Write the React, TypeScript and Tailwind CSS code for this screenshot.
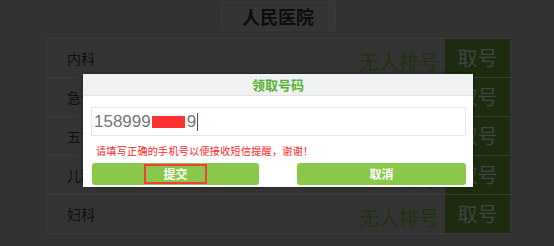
import React from 'react';

const rows = ['内科', '急诊科', '五官科', '儿科', '妇科'];

const DeptRow: React.FC<{ name: string }> = ({ name }) => (
    <div className="flex h-[39px] border-b border-[#3a3a3a]">
        <div className="flex-1 flex items-center pl-[20px] text-[14px] text-[#0e0e0e]">{name}</div>
        <div className="flex items-center pt-[8px] pr-[6px] text-[20px] text-[#22320f]">无人排号</div>
        <div className="w-[65px] flex items-center justify-center bg-[#1d2c0f] text-[20px] text-[#444444]">取号</div>
    </div>
);

export default function App() {
    return (
        <div className="relative w-[554px] h-[246px] overflow-hidden bg-[#333333] font-['Noto_Sans_CJK_SC',sans-serif]">
            <div className="pl-[46px] pt-[2px]">
                <div className="w-[464px] flex justify-center">
                    <div className="w-[115px] h-[29px] flex items-center justify-center border border-[#393939] bg-[#353535] text-[18px] font-bold text-[#0c0c0c]">
                        人民医院
                    </div>
                </div>
                <div className="mt-[7px] w-[464px] border-t border-l border-[#3a3a3a] bg-[#343434]">
                    {rows.map(r => <DeptRow key={r} name={r} />)}
                </div>
            </div>

            {/* dialog */}
            <div className="absolute left-[83px] top-[74px] w-[390px] h-[113px] bg-white shadow-[0_0_4px_rgba(0,0,0,0.4)]">
                <div className="h-[22px] flex items-center justify-center bg-[#f0f1f3] border-b border-[#e2e3e5] text-[13px] font-bold text-[#57b12f]">
                    领取号码
                </div>
                <div className="pl-[8px] pr-[7px]">
                    <div className="mt-[11px] h-[29px] flex items-center pl-[2px] border border-[#e7e7e7] font-['Liberation_Sans',sans-serif] text-[17px] text-[#767676]">
                        <span>158999</span>
                        <span className="ml-[1px] inline-block w-[33px] h-[12px] bg-[#ff3030]"></span>
                        <span className="ml-[2px]">9</span>
                        <span className="ml-[1px] inline-block w-px h-[18px] bg-[#555]"></span>
                    </div>
                    <div className="mt-[8px] pl-[5px] leading-[14px] text-[10px] tracking-[0.35px] text-[#ff1e1e]">
                        请填写正确的手机号以便接收短信提醒，谢谢！
                    </div>
                    <div className="mt-[5px] flex">
                        <button className="relative ml-[1px] w-[167px] h-[22px] flex items-center justify-center rounded-[3px] bg-[#89c848] text-[12px] font-bold text-white">
                            提交
                            <span className="absolute left-[52px] top-[1px] w-[63px] h-[20px] border-2 border-[#f73b3b]"></span>
                        </button>
                        <button className="ml-auto w-[169px] h-[22px] flex items-center justify-center rounded-[3px] bg-[#89c848] text-[12px] font-bold text-white">
                            取消
                        </button>
                    </div>
                </div>
            </div>
        </div>
    );
}
